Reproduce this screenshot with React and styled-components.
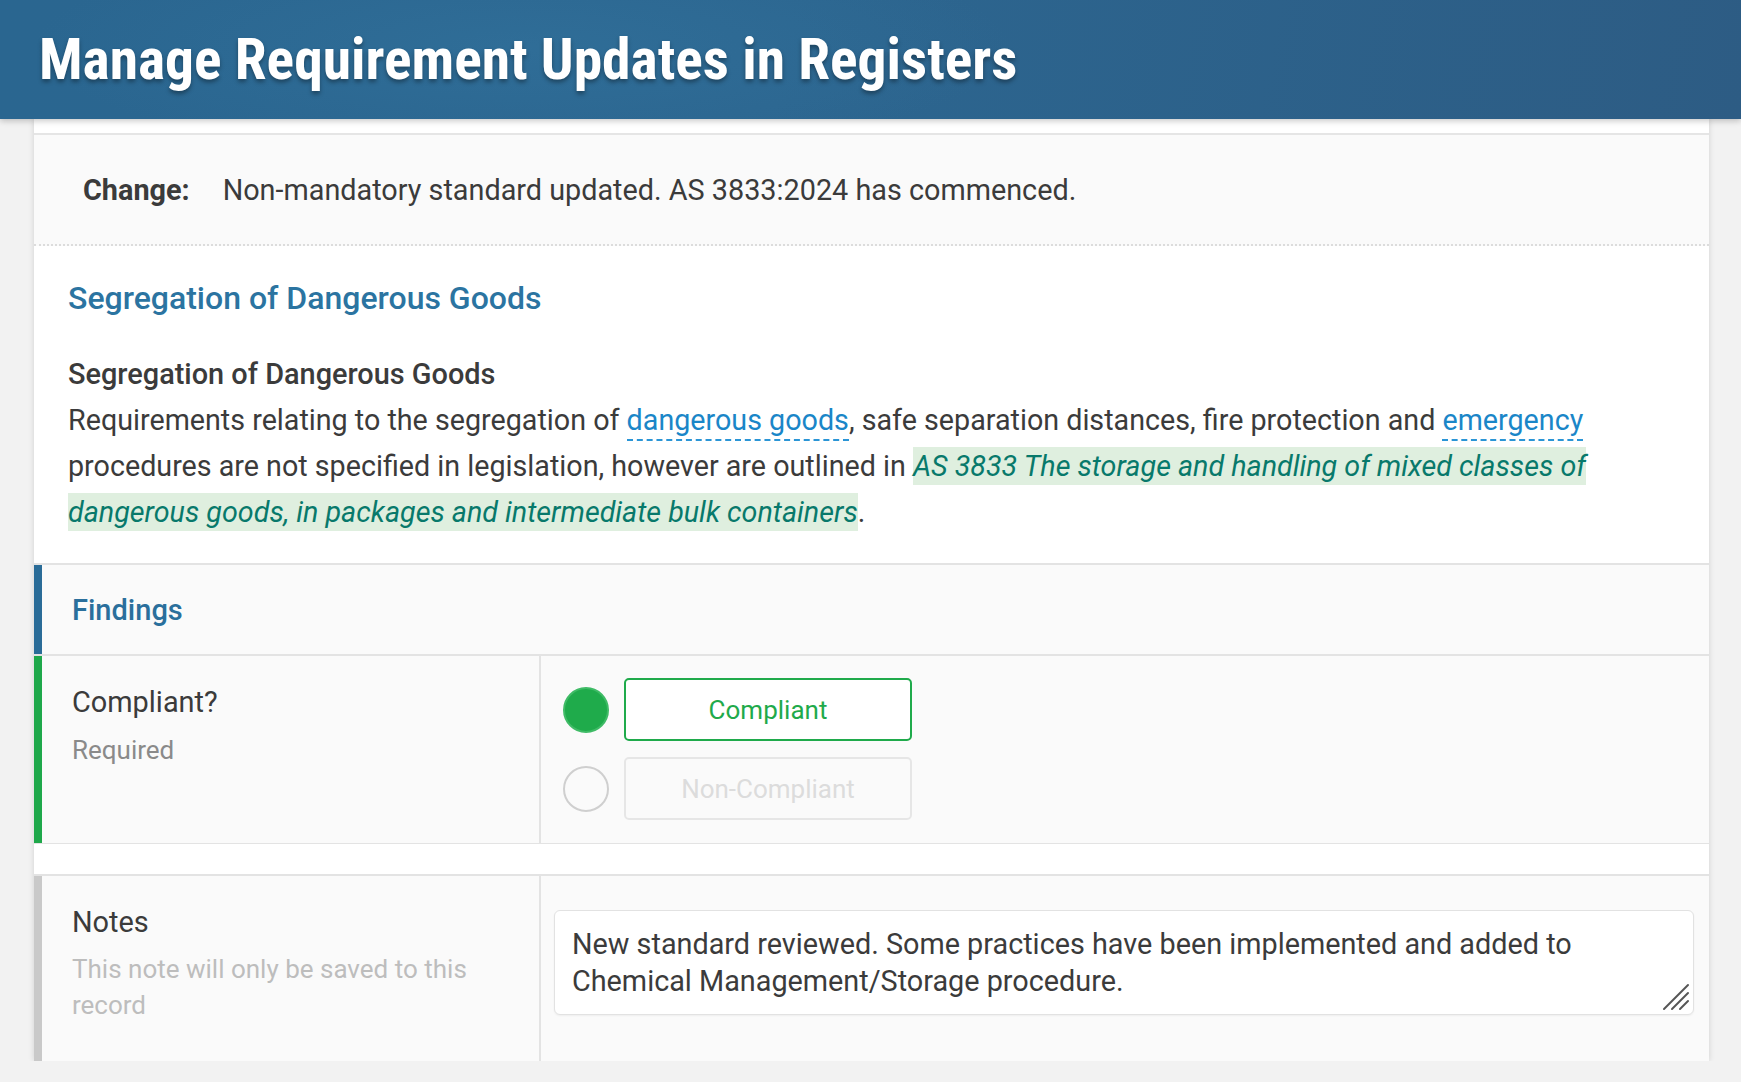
import React from 'react';
import styled, { createGlobalStyle } from 'styled-components';

const GlobalStyle = createGlobalStyle`
  body {
    margin: 0;
    background: #f2f2f2;
    font-family: Roboto, "Noto Sans", "Liberation Sans", sans-serif;
    color: #3b3b3b;
  }
`;

const Header = styled.header`
  position: relative;
  z-index: 1;
  height: 119px;
  display: flex;
  align-items: center;
  padding: 2px 0 0 39px;
  box-sizing: border-box;
  background:
    radial-gradient(ellipse 700px 160px at 30% 40%, rgba(52, 118, 160, 0.45), transparent 70%),
    linear-gradient(100deg, #2a6690 0%, #2c6690 45%, #2d5c84 100%);
  box-shadow: 0 2px 6px rgba(0, 0, 0, 0.22);
`;

const Title = styled.h1`
  margin: 0;
  font-size: 57.5px;
  font-weight: 700;
  font-stretch: 75%;
  line-height: 1.15;
  color: #ffffff;
  text-shadow: 0 3px 4px rgba(0, 0, 0, 0.35);
`;

const Card = styled.main`
  margin: 0 32px 0 34px;
  background: #ffffff;
  padding-top: 14px;
  box-shadow: 0 0 6px rgba(0, 0, 0, 0.14);
`;

const ChangeRow = styled.div`
  display: flex;
  align-items: center;
  gap: 33px;
  height: 109px;
  padding-left: 49px;
  background: #fafafa;
  border-top: 2px solid #e5e5e5;
  border-bottom: 2px dotted #dcdcdc;
  font-size: 28.8px;
`;

const ChangeLabel = styled.span`
  font-weight: 700;
`;

const Body = styled.section`
  padding: 32px 34px 28px;
  font-size: 28.7px;
  line-height: 46px;
`;

const SectionTitle = styled.h2`
  margin: 0 0 33px;
  font-size: 32px;
  line-height: 40px;
  font-weight: 500;
  color: #2b74a1;
`;

const SubTitle = styled.h3`
  margin: 0;
  font-size: 28.9px;
  line-height: 46px;
  font-weight: 500;
  color: #3b3b3b;
`;

const Paragraph = styled.p`
  margin: 0;
`;

const Term = styled.span`
  color: #1a86c8;
  border-bottom: 2px dashed #2a95d6;
  padding-bottom: 2px;
`;

const Standard = styled.span`
  font-style: italic;
  color: #08796b;
  background: #dfefdf;
  padding: 2px 0;
`;

const FindingsBar = styled.div`
  height: 89px;
  display: flex;
  align-items: center;
  padding-left: 38px;
  background: #fafafa;
  border-top: 2px solid #e3e3e3;
  box-shadow: inset 8px 0 0 #2a6c98;
  font-size: 29px;
  font-weight: 500;
  color: #2a6f9c;
`;

const FieldRow = styled.div`
  display: grid;
  grid-template-columns: 507px 1fr;
  background: #fafafa;
  border-top: 2px solid #e3e3e3;
  border-bottom: ${(p) => (p.last ? 'none' : '1px solid #e3e3e3')};
  box-shadow: inset 8px 0 0 ${(p) => p.accent};
`;

const FieldLabel = styled.div`
  padding: 28px 20px 38px 38px;
  border-right: 2px solid #e3e3e3;
`;

const LabelText = styled.div`
  font-size: 28.9px;
  line-height: 36px;
  color: #3b3b3b;
`;

const HintText = styled.div`
  margin-top: ${(p) => p.gap}px;
  font-size: 26px;
  line-height: 36px;
  color: ${(p) => p.color};
`;

const Options = styled.div`
  display: flex;
  flex-direction: column;
  gap: 16px;
  padding: 22px 0 23px 22px;
`;

const Option = styled.label`
  display: flex;
  align-items: center;
  gap: 15px;
  cursor: pointer;
`;

const Radio = styled.span`
  width: 46px;
  height: 46px;
  border-radius: 50%;
  box-sizing: border-box;
  background: ${(p) => (p.checked ? '#1fab4b' : 'transparent')};
  border: 2px solid ${(p) => (p.checked ? '#3fbb66' : '#cfcfcf')};
`;

const OptionButton = styled.span`
  width: 288px;
  height: 63px;
  box-sizing: border-box;
  display: flex;
  align-items: center;
  justify-content: center;
  border-radius: 5px;
  font-size: 26px;
  border: 2px solid ${(p) => (p.checked ? '#1faa4b' : '#e6e6e6')};
  color: ${(p) => (p.checked ? '#1faa4b' : '#dcdcdc')};
  background: ${(p) => (p.checked ? '#ffffff' : '#fafafa')};
`;

const Spacer = styled.div`
  height: 30px;
  background: #ffffff;
`;

const NotesCell = styled.div`
  padding: 34px 15px 0 13px;
`;

const NotesBox = styled.div`
  position: relative;
`;

const NotesInput = styled.textarea`
  display: block;
  width: 100%;
  height: 105px;
  box-sizing: border-box;
  padding: 15px 40px 0 17px;
  border: 1px solid #e2e2e2;
  border-radius: 6px;
  background: #ffffff;
  box-shadow: 0 1px 2px rgba(0, 0, 0, 0.05);
  font-family: Roboto, "Noto Sans", sans-serif;
  font-size: 28.8px;
  line-height: 37px;
  color: #3b3b3b;
  resize: none;
  outline: none;
`;

const ResizeGrip = styled.svg`
  position: absolute;
  right: 4px;
  bottom: 4px;
  pointer-events: none;
`;

export default function App() {
  return (
    <>
      <GlobalStyle />
      <Header>
        <Title>Manage Requirement Updates in Registers</Title>
      </Header>
      <Card>
        <ChangeRow>
          <ChangeLabel>Change:</ChangeLabel>
          <span>Non-mandatory standard updated. AS 3833:2024 has commenced.</span>
        </ChangeRow>
        <Body>
          <SectionTitle>Segregation of Dangerous Goods</SectionTitle>
          <SubTitle>Segregation of Dangerous Goods</SubTitle>
          <Paragraph>
            Requirements relating to the segregation of <Term>dangerous goods</Term>, safe separation
            distances, fire protection and <Term>emergency</Term> procedures are not specified in
            legislation, however are outlined in{' '}
            <Standard>
              AS 3833 The storage and handling of mixed classes of dangerous goods, in packages and
              intermediate bulk containers
            </Standard>
            .
          </Paragraph>
        </Body>
        <FindingsBar>Findings</FindingsBar>
        <FieldRow accent="#1ea84a">
          <FieldLabel>
            <LabelText>Compliant?</LabelText>
            <HintText gap={12} color="#8a8a8a">Required</HintText>
          </FieldLabel>
          <Options>
            <Option>
              <Radio checked />
              <OptionButton checked>Compliant</OptionButton>
            </Option>
            <Option>
              <Radio />
              <OptionButton>Non-Compliant</OptionButton>
            </Option>
          </Options>
        </FieldRow>
        <Spacer />
        <FieldRow accent="#c9c9c9" last>
          <FieldLabel>
            <LabelText>Notes</LabelText>
            <HintText gap={11} color="#bdbdbd">
              This note will only be saved to this record
            </HintText>
          </FieldLabel>
          <NotesCell>
            <NotesBox>
              <NotesInput defaultValue="New standard reviewed. Some practices have been implemented and added to Chemical Management/Storage procedure." />
              <ResizeGrip width="28" height="28" viewBox="0 0 28 28">
                <g stroke="#555" strokeWidth="2" strokeLinecap="round">
                  <line x1="2" y1="26" x2="26" y2="2" />
                  <line x1="10" y1="26" x2="26" y2="10" />
                  <line x1="18" y1="26" x2="26" y2="18" />
                </g>
              </ResizeGrip>
            </NotesBox>
          </NotesCell>
        </FieldRow>
      </Card>
    </>
  );
}
